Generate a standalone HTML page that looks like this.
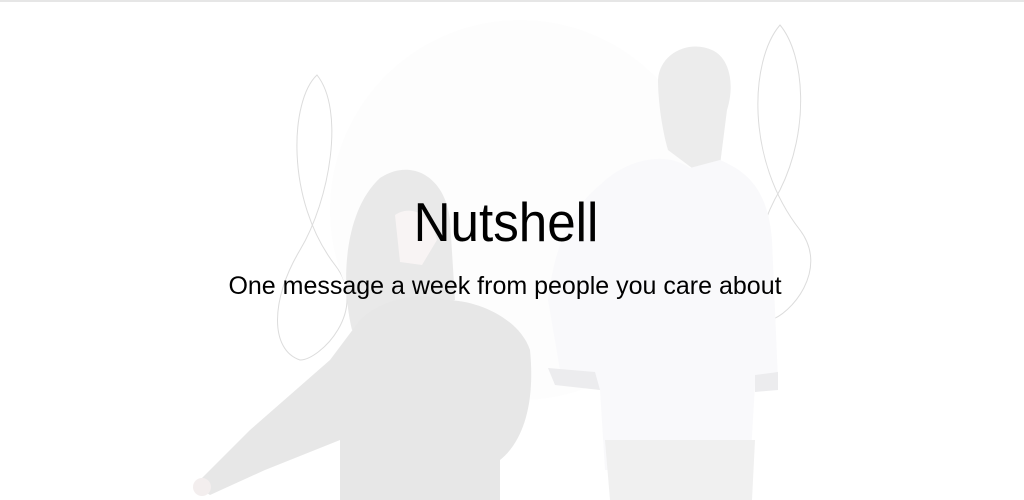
<!DOCTYPE html>
<html><head><meta charset="utf-8"><style>
html,body{margin:0;padding:0;background:#fff;width:1024px;height:500px;overflow:hidden;font-family:"Liberation Sans",sans-serif;}
.top{position:absolute;left:0;top:0;width:1024px;height:2px;background:#e6e6e6;}
svg{position:absolute;left:0;top:0;}
h1{position:absolute;left:0;width:1012px;top:191px;margin:0;text-align:center;font-weight:normal;font-size:55px;line-height:1.15;color:#000;transform:scaleX(0.93);transform-origin:506px 0;}
p{position:absolute;left:0;width:1010px;top:272px;margin:0;text-align:center;font-size:25px;line-height:1.15;color:#000;letter-spacing:0px;}
</style></head><body>
<div class="top"></div>
<svg width="1024" height="500" viewBox="0 0 1024 500">
<g fill="none" stroke="#dcdcdc" stroke-width="1">
<path d="M317 75 C290 100 285 200 335 265 C370 310 320 360 300 360 C270 350 270 300 300 250 C330 200 345 110 317 75Z"/>
<path d="M780 25 C750 60 745 160 800 230 C830 270 790 315 770 320 C745 310 750 240 780 190 C810 130 805 55 780 25Z"/>
</g>
<circle cx="520" cy="210" r="190" fill="#fdfdfd"/>
<path d="M658 80 C660 52 690 40 712 50 C730 58 735 85 727 110 L720 165 L692 168 L668 150 C662 130 658 100 658 80Z" fill="#ececec"/>
<path d="M600 185 C625 160 665 150 690 168 L720 160 C748 172 768 190 772 240 L778 380 L755 385 L750 470 L605 470 L600 390 L560 370 L548 300 C555 240 575 205 600 185Z" fill="#f9f9fb"/>
<path d="M548 368 L595 372 L600 390 L555 385Z" fill="#ececee"/>
<path d="M755 375 L778 372 L778 390 L755 392Z" fill="#ececee"/>
<path d="M605 440 L755 440 L752 500 L610 500Z" fill="#f0f0f0"/>
<path d="M352 330 C340 280 345 210 380 178 C410 158 445 175 450 220 L455 300 L420 308 Z" fill="#e9e9e9"/>
<path d="M395 215 C410 205 430 212 437 240 L422 265 L400 262 Z" fill="#f8f4f4"/>
<path d="M360 320 C380 300 420 290 445 300 C480 300 520 320 530 350 C535 400 525 440 500 460 L500 500 L340 500 L340 440 L265 470 L210 495 L195 485 L250 430 L330 360 Z" fill="#e7e7e7"/>
<circle cx="202" cy="487" r="9" fill="#f3eeee"/>
</svg>
<h1>Nutshell</h1>
<p>One message a week from people you care about</p>
</body></html>
